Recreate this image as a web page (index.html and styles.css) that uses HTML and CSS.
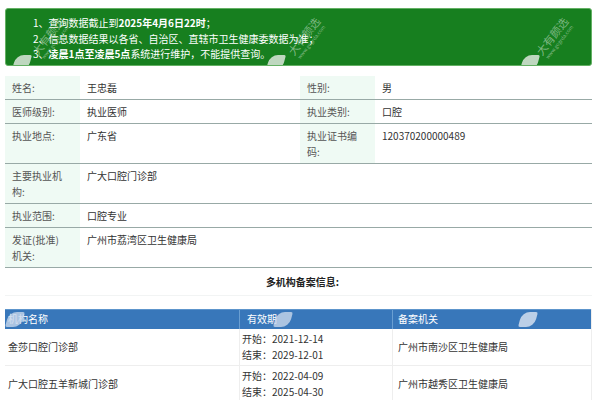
FILE: index.html
```html
<!DOCTYPE html>
<html lang="zh-CN">
<head>
<meta charset="utf-8">
<link rel="stylesheet" href="styles.css">
</head>
<body>
<div class="page">
  <div class="notice">
    <p>1、查询数据截止到<b>2025年4月6日22时</b>；</p>
    <p>2、信息数据结果以各省、自治区、直辖市卫生健康委数据为准；</p>
    <p>3、<b>凌晨1点至凌晨5点</b>系统进行维护，不能提供查询。</p>
    <div class="wm wm1"><span class="wm-big">大有颜选</span><span class="wm-small">www.gogrda.com</span></div>
    <div class="wm wm2"><span class="wm-big">大有颜选</span><span class="wm-small">www.gogrda.com</span></div>
    <div class="wm wm3"><span class="wm-big">大有颜选</span><span class="wm-small">www.gogrda.com</span></div>
    <div class="leaf leaf1"></div>
    <div class="leaf leaf2"></div>
    <div class="leaf leaf3"></div>
  </div>

  <div class="info">
    <div class="lab">姓名:</div><div class="val">王忠磊</div>
    <div class="lab">性别:</div><div class="val">男</div>
    <div class="lab">医师级别:</div><div class="val">执业医师</div>
    <div class="lab">执业类别:</div><div class="val">口腔</div>
    <div class="lab">执业地点:</div><div class="val">广东省</div>
    <div class="lab">执业证书编码:</div><div class="val">120370200000489</div>
    <div class="lab">主要执业机构:</div><div class="val wide">广大口腔门诊部</div>
    <div class="lab">执业范围:</div><div class="val wide">口腔专业</div>
    <div class="lab">发证(批准)机关:</div><div class="val wide">广州市荔湾区卫生健康局</div>
  </div>

  <div class="section-title">多机构备案信息:</div>

  <div class="multi">
    <div class="mrow head">
      <div class="c1">机构名称</div>
      <div class="c2">有效期</div>
      <div class="c3">备案机关</div>
    </div>
    <div class="mrow">
      <div class="c1">金莎口腔门诊部</div>
      <div class="c2"><div>开始：2021-12-14</div><div>结束：2029-12-01</div></div>
      <div class="c3">广州市南沙区卫生健康局</div>
    </div>
    <div class="mrow">
      <div class="c1">广大口腔五羊新城门诊部</div>
      <div class="c2"><div>开始：2022-04-09</div><div>结束：2025-04-30</div></div>
      <div class="c3">广州市越秀区卫生健康局</div>
    </div>
    <div class="leaf bl1"></div>
    <div class="leaf bl2"></div>
    <div class="leaf bl3"></div>
  </div>
</div>
</body>
</html>
```

FILE: styles.css
```css
* { box-sizing: border-box; }
html, body { margin: 0; padding: 0; background: #fff; }
body {
  font-family: "Noto Sans CJK SC", "Noto Sans", sans-serif;
  font-size: 10px;
  color: #333;
  overflow: hidden;
}
.page {
  padding: 8px 8px 0 5px;
}
.notice {
  position: relative;
  overflow: hidden;
  background: #177f1f;
  border: 1px solid #63b063;
  border-radius: 3px;
  color: #fff;
  padding: 6px 0 4px 27px;
  height: 58px;
}
.notice p {
  margin: 0;
  line-height: 15.5px;
  position: relative;
  z-index: 1;
}
.notice b { font-weight: bold; }

.wm {
  position: absolute;
  transform: rotate(-52deg);
  transform-origin: left top;
  color: rgba(255,255,255,0.45);
  display: flex;
  flex-direction: column;
  align-items: center;
  line-height: 1;
  pointer-events: none;
  z-index: 2;
}
.wm-big { font-size: 11px; }
.wm-small { font-size: 5px; margin-top: 1px; }
.wm1 { left: 24px; top: 41px; }
.wm2 { left: 280px; top: 41px; }
.wm3 { left: 528px; top: 41px; }

.leaf {
  position: absolute;
  width: 16px;
  height: 15px;
  background: rgba(205,222,205,0.92);
  border-radius: 8px 2px 8px 2px;
  transform: skewX(-15deg);
  z-index: 2;
}
.leaf1 { left: 8px; top: 46px; }
.leaf2 { left: 262px; top: 46px; }
.leaf3 { left: 516px; top: 46px; }

.info {
  margin-top: 10px;
  display: grid;
  grid-template-columns: 75px 220px 75px 1fr;
}
.info > div {
  border-bottom: 1px solid #98a9a6;
  padding: 4px 6px 3px 7px;
  line-height: 16px;
}
.lab {
  background: #effaf4;
  color: #555;
  padding-right: 12px !important;
}
.val { color: #333; }
.val.wide { grid-column: span 3; }

.section-title {
  margin-top: 6px;
  text-align: center;
  font-weight: bold;
  line-height: 16px;
  padding: 0 0 5px 8px;
  border-bottom: 1px solid #f2f4f4;
  color: #222;
}

.multi {
  position: relative;
  margin-top: 13px;
  border-right: 1px solid #eeeeee;
}
.mrow {
  display: grid;
  grid-template-columns: 234px 153px 1fr;
  border-bottom: 1px solid #eeeeee;
}
.mrow > div {
  line-height: 16px;
  padding: 2px 5px;
  display: flex;
  flex-direction: column;
  justify-content: center;
}
.mrow > div + div { border-left: 1px solid #eeeeee; }
.mrow .c1 { padding-left: 3px; }
.mrow .c2 { padding-left: 2px; }
.mrow.head {
  background: #3877ba;
  color: #fff;
  border-top: 1px solid #5d95cc;
  border-bottom: none;
}
.mrow.head > div { padding-top: 1px; padding-bottom: 2px; }
.mrow.head .c2 { padding-left: 7px; }
.mrow.head > div + div { border-left: 1px solid #6a9fd2; }

.bl1 { left: 2px; top: 3px; background: rgba(200,215,235,0.8); }
.bl2 { left: 270px; top: 3px; background: rgba(200,215,235,0.8); }
.bl3 { left: 515px; top: 3px; background: rgba(210,222,238,0.85); }
```
